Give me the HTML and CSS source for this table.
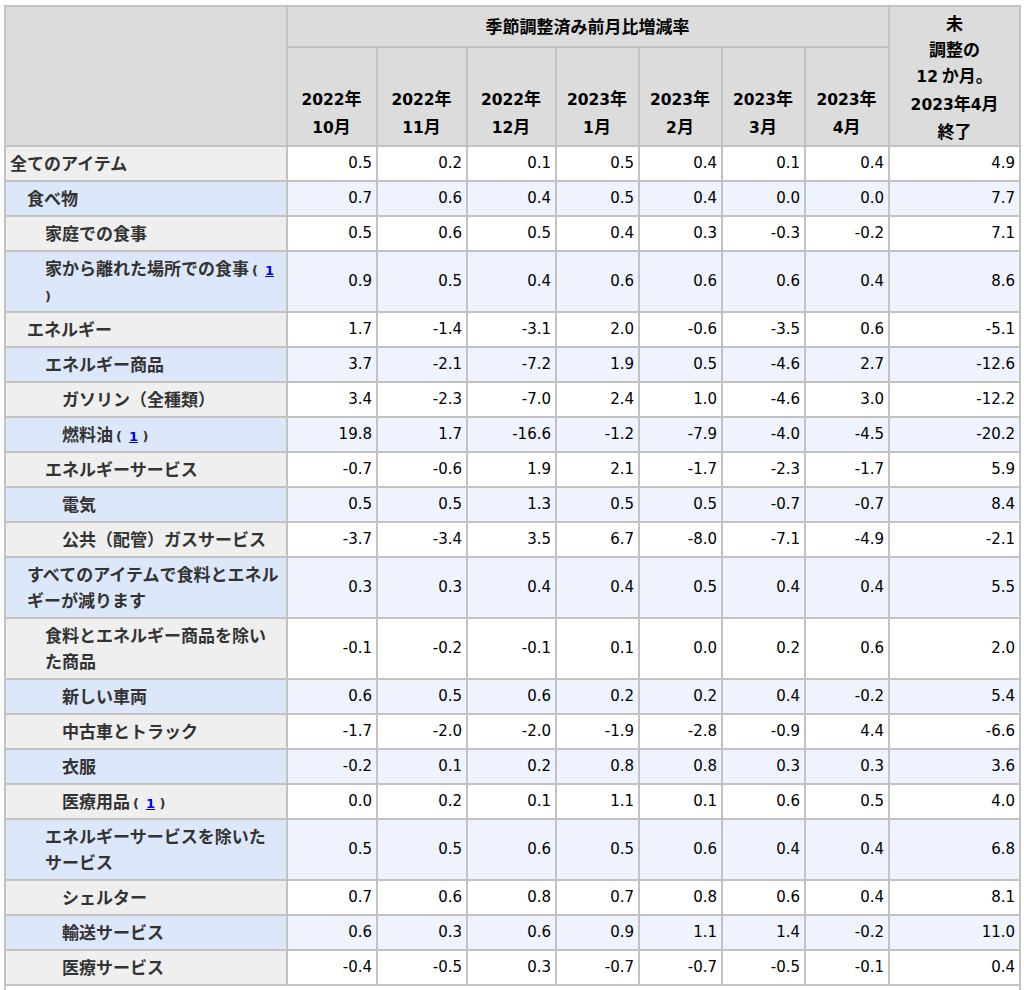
FILE: index.html
```html
<!DOCTYPE html>
<html lang="ja">
<head>
<meta charset="utf-8">
<title>消費者物価指数</title>
<link rel="stylesheet" href="styles.css">
</head>
<body>
<table class="cpi">
  <colgroup>
    <col class="c-stub">
    <col class="c-m"><col class="c-m"><col class="c-m2">
    <col class="c-s"><col class="c-s"><col class="c-s"><col class="c-s2">
    <col class="c-last">
  </colgroup>
  <thead>
    <tr>
      <th class="corner" rowspan="2"></th>
      <th class="group" colspan="7">季節調整済み前月比増減率</th>
      <th class="unadj" rowspan="2">未<br>調整の<br><span class="n">12</span> か月。<br><span class="n">2023</span>年<span class="n">4</span>月<br>終了</th>
    </tr>
    <tr class="months">
      <th><span class="n">2022</span>年<br><span class="n">10</span>月</th>
      <th><span class="n">2022</span>年<br><span class="n">11</span>月</th>
      <th><span class="n">2022</span>年<br><span class="n">12</span>月</th>
      <th><span class="n">2023</span>年<br><span class="n">1</span>月</th>
      <th><span class="n">2023</span>年<br><span class="n">2</span>月</th>
      <th><span class="n">2023</span>年<br><span class="n">3</span>月</th>
      <th><span class="n">2023</span>年<br><span class="n">4</span>月</th>
    </tr>
  </thead>
  <tbody>
    <tr class="odd"><th class="l0">全てのアイテム</th><td>0.5</td><td>0.2</td><td>0.1</td><td>0.5</td><td>0.4</td><td>0.1</td><td>0.4</td><td>4.9</td></tr>
    <tr class="even"><th class="l1">食べ物</th><td>0.7</td><td>0.6</td><td>0.4</td><td>0.5</td><td>0.4</td><td>0.0</td><td>0.0</td><td>7.7</td></tr>
    <tr class="odd"><th class="l2">家庭での食事</th><td>0.5</td><td>0.6</td><td>0.5</td><td>0.4</td><td>0.3</td><td>-0.3</td><td>-0.2</td><td>7.1</td></tr>
    <tr class="even"><th class="l2">家から離れた場所での食事<span class="fn">(<a href="#fn1">1</a> )</span></th><td>0.9</td><td>0.5</td><td>0.4</td><td>0.6</td><td>0.6</td><td>0.6</td><td>0.4</td><td>8.6</td></tr>
    <tr class="odd"><th class="l1">エネルギー</th><td>1.7</td><td>-1.4</td><td>-3.1</td><td>2.0</td><td>-0.6</td><td>-3.5</td><td>0.6</td><td>-5.1</td></tr>
    <tr class="even"><th class="l2">エネルギー商品</th><td>3.7</td><td>-2.1</td><td>-7.2</td><td>1.9</td><td>0.5</td><td>-4.6</td><td>2.7</td><td>-12.6</td></tr>
    <tr class="odd"><th class="l3">ガソリン（全種類）</th><td>3.4</td><td>-2.3</td><td>-7.0</td><td>2.4</td><td>1.0</td><td>-4.6</td><td>3.0</td><td>-12.2</td></tr>
    <tr class="even"><th class="l3">燃料油<span class="fn">(<a href="#fn1">1</a> )</span></th><td>19.8</td><td>1.7</td><td>-16.6</td><td>-1.2</td><td>-7.9</td><td>-4.0</td><td>-4.5</td><td>-20.2</td></tr>
    <tr class="odd"><th class="l2">エネルギーサービス</th><td>-0.7</td><td>-0.6</td><td>1.9</td><td>2.1</td><td>-1.7</td><td>-2.3</td><td>-1.7</td><td>5.9</td></tr>
    <tr class="even"><th class="l3">電気</th><td>0.5</td><td>0.5</td><td>1.3</td><td>0.5</td><td>0.5</td><td>-0.7</td><td>-0.7</td><td>8.4</td></tr>
    <tr class="odd"><th class="l3">公共（配管）ガスサービス</th><td>-3.7</td><td>-3.4</td><td>3.5</td><td>6.7</td><td>-8.0</td><td>-7.1</td><td>-4.9</td><td>-2.1</td></tr>
    <tr class="even"><th class="l1">すべてのアイテムで食料とエネルギーが減ります</th><td>0.3</td><td>0.3</td><td>0.4</td><td>0.4</td><td>0.5</td><td>0.4</td><td>0.4</td><td>5.5</td></tr>
    <tr class="odd"><th class="l2">食料とエネルギー商品を除いた商品</th><td>-0.1</td><td>-0.2</td><td>-0.1</td><td>0.1</td><td>0.0</td><td>0.2</td><td>0.6</td><td>2.0</td></tr>
    <tr class="even"><th class="l3">新しい車両</th><td>0.6</td><td>0.5</td><td>0.6</td><td>0.2</td><td>0.2</td><td>0.4</td><td>-0.2</td><td>5.4</td></tr>
    <tr class="odd"><th class="l3">中古車とトラック</th><td>-1.7</td><td>-2.0</td><td>-2.0</td><td>-1.9</td><td>-2.8</td><td>-0.9</td><td>4.4</td><td>-6.6</td></tr>
    <tr class="even"><th class="l3">衣服</th><td>-0.2</td><td>0.1</td><td>0.2</td><td>0.8</td><td>0.8</td><td>0.3</td><td>0.3</td><td>3.6</td></tr>
    <tr class="odd"><th class="l3">医療用品<span class="fn">(<a href="#fn1">1</a> )</span></th><td>0.0</td><td>0.2</td><td>0.1</td><td>1.1</td><td>0.1</td><td>0.6</td><td>0.5</td><td>4.0</td></tr>
    <tr class="even"><th class="l2">エネルギーサービスを除いたサービス</th><td>0.5</td><td>0.5</td><td>0.6</td><td>0.5</td><td>0.6</td><td>0.4</td><td>0.4</td><td>6.8</td></tr>
    <tr class="odd"><th class="l3">シェルター</th><td>0.7</td><td>0.6</td><td>0.8</td><td>0.7</td><td>0.8</td><td>0.6</td><td>0.4</td><td>8.1</td></tr>
    <tr class="even"><th class="l3">輸送サービス</th><td>0.6</td><td>0.3</td><td>0.6</td><td>0.9</td><td>1.1</td><td>1.4</td><td>-0.2</td><td>11.0</td></tr>
    <tr class="odd"><th class="l3">医療サービス</th><td>-0.4</td><td>-0.5</td><td>0.3</td><td>-0.7</td><td>-0.7</td><td>-0.5</td><td>-0.1</td><td>0.4</td></tr>
  </tbody>
  <tfoot>
    <tr><td class="foot" colspan="9" id="fn1"></td></tr>
  </tfoot>
</table>
</body>
</html>
```

FILE: styles.css
```css
html, body {
  margin: 0;
  padding: 0;
  background: #ffffff;
}

body {
  padding: 5px 0 0 4px;
  font-family: "DejaVu Sans", "Noto Sans CJK JP", sans-serif;
}

.cpi {
  border-collapse: collapse;
  table-layout: fixed;
  width: 1016px;
  border: 2px solid #bdbdbd;
}

.c-stub { width: 282px; }
.c-m { width: 90px; }
.c-m2 { width: 89px; }
.c-s { width: 83px; }
.c-s2 { width: 84px; }
.c-last { width: 131px; }

.cpi th,
.cpi td {
  border: 2px solid #c2c2c2;
  line-height: 26px;
  padding: 3px 5px 4px 4px;
}

.cpi thead th {
  background: #dcdcdc;
  color: #000;
  font-family: "Noto Sans CJK JP", "DejaVu Sans", sans-serif;
  font-weight: 700;
  font-size: 17px;
  text-align: center;
}

.cpi thead .n {
  font-family: "DejaVu Sans", sans-serif;
  font-size: 15.5px;
}

.cpi thead .group {
  vertical-align: middle;
  height: 29px;
}

.cpi thead .months th {
  vertical-align: bottom;
  height: 83px;
}

.cpi thead .unadj {
  vertical-align: middle;
  padding: 3px 2px 1px;
}

.cpi tbody th {
  font-family: "Noto Sans CJK JP", sans-serif;
  font-weight: 700;
  font-size: 17px;
  color: #333333;
  text-align: left;
  vertical-align: middle;
  padding-right: 6px;
}

.cpi tbody td {
  font-family: "DejaVu Sans", sans-serif;
  font-size: 15px;
  color: #000;
  text-align: right;
  vertical-align: middle;
  padding-right: 4px;
}

.cpi tbody tr.odd th { background: #efefef; }
.cpi tbody tr.odd td { background: #ffffff; }
.cpi tbody tr.even th { background: #dde7fa; }
.cpi tbody tr.even td { background: #eef3fd; }

.cpi tbody th.l0 { padding-left: 4px; }
.cpi tbody th.l1 { padding-left: 21px; }
.cpi tbody th.l2 { padding-left: 39px; }
.cpi tbody th.l3 { padding-left: 56px; }

.fn {
  font-family: "DejaVu Sans", sans-serif;
  font-size: 13px;
  line-height: 1;
  font-weight: 700;
  color: #333;
  margin-left: 3px;
}

.fn a {
  color: #0000ee;
  text-decoration: underline;
  margin-left: 7px;
}

.cpi tfoot td {
  background: #fff;
  height: 40px;
  padding: 0;
}
```
